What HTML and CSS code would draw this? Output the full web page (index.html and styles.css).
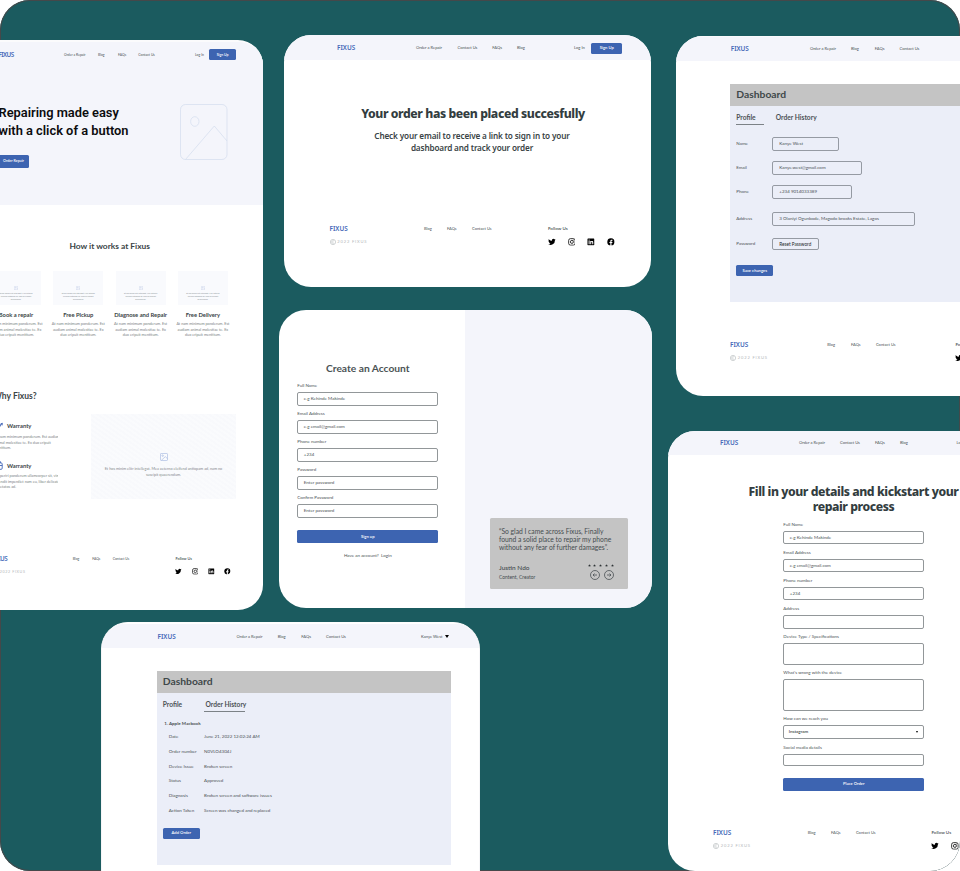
FILE: index.html
```html
<!DOCTYPE html>
<html lang="en">
<head>
<meta charset="utf-8">
<title>Fixus screens</title>
<link rel="stylesheet" href="styles.css">
</head>
<body>
<svg class="defs" aria-hidden="true">
  <symbol id="twitter" viewBox="0 0 24 24"><path d="M23.6 4.9c-.8.4-1.700.6-2.700.8 1-.6 1.700-1.500 2-2.600-.9.500-1.900.9-3 1.100A4.700 4.700 0 0 0 11.900 8.500C8 8.300 4.500 6.400 2.200 3.600c-1.300 2.100-.6 4.900 1.400 6.300-.8 0-1.500-.2-2.100-.6 0 2.200 1.500 4.200 3.800 4.700-.7.200-1.400.2-2.100.1.600 1.900 2.300 3.200 4.400 3.300A9.500 9.500 0 0 1 .6 19.300 13.400 13.400 0 0 0 21.200 7.400c.9-.7 1.800-1.500 2.400-2.500z"/></symbol>
  <symbol id="instagram" viewBox="0 0 24 24"><rect x="2" y="2" width="20" height="20" rx="5.500" fill="none" stroke="currentColor" stroke-width="2.400"/><circle cx="12" cy="12" r="4.600" fill="none" stroke="currentColor" stroke-width="2.400"/><circle cx="17.500" cy="6.500" r="1.500"/></symbol>
  <symbol id="linkedin" viewBox="0 0 24 24"><path fill-rule="evenodd" d="M3 1.500h18A1.500 1.500 0 0 1 22.500 3v18a1.500 1.500 0 0 1-1.500 1.500H3A1.500 1.500 0 0 1 1.500 21V3A1.500 1.500 0 0 1 3 1.500zM5 9.500v9.500h3V9.500zM6.500 4.700a1.800 1.800 0 1 0 0 3.600 1.800 1.800 0 0 0 0-3.600zM10 9.500V19h3v-5c0-2.700 3.200-2.700 3.200 0v5h3v-6c0-4.200-4.400-4.500-6.200-2.200V9.500z"/></symbol>
  <symbol id="facebook" viewBox="0 0 24 24"><path d="M23 12A11 11 0 1 0 10.300 22.900v-7.700H7.500V12h2.800V9.600c0-2.800 1.600-4.300 4.100-4.300 1.200 0 2.500.2 2.500.2v2.700h-1.400c-1.400 0-1.800.9-1.800 1.700V12h3.100l-.5 3.200h-2.600v7.700A11 11 0 0 0 23 12z"/></symbol>
  <symbol id="copyright" viewBox="0 0 24 24"><circle cx="12" cy="12" r="10.500" fill="none" stroke="currentColor" stroke-width="2.400"/><path d="M16 8.700a5.200 5.200 0 1 0 0 6.600" fill="none" stroke="currentColor" stroke-width="2.400"/></symbol>
  <symbol id="image" viewBox="0 0 24 24"><g fill="none" stroke="currentColor" stroke-width="2"><rect x="1.500" y="1.500" width="21" height="21" rx="2"/><circle cx="8" cy="8" r="2.200"/><path d="M4 22 16 11l6.500 6"/></g></symbol>
  <symbol id="star" viewBox="0 0 24 24"><path d="m12 1 3.200 7.400 8 .7-6 5.300 1.800 7.800-7-4.100-7 4.100 1.800-7.800-6-5.300 8-.7z"/></symbol>
</svg>

<main class="board">

  <section class="screen home">
    <div class="hero">
      <nav class="nav"><b class="logo">FIXUS</b><a>Order a Repair</a><a>Blog</a><a>FAQs</a><a>Contact Us</a><a>Log In</a><span class="btn">Sign Up</span></nav>
      <div class="hero-body">
        <div>
          <h1>Repairing made easy<br>with a click of a button</h1>
          <span class="btn">Order Repair</span>
        </div>
        <svg class="hero-image" viewBox="0 0 48 56"><g fill="none" stroke="#d3ddee" stroke-width=".7"><rect x=".5" y=".5" width="46.500" height="55" rx="5"/><ellipse cx="14.800" cy="17.500" rx="4.200" ry="4.800"/><path d="M5.500 55.500 34.300 22 47 37"/></g></svg>
      </div>
    </div>
    <h2 class="how">How it works at Fixus</h2>
    <div class="steps">
      <article><div class="thumb"><svg><use href="#image"/></svg><p>Et hos minim elitr intellegat. Mea aeterno<br>eleifend antiopam ad, nam no suscipit<br>quaerendum.</p></div><h3>Book a repair</h3><p class="copy">At nam minimum ponderum. Est<br>audiam animal molestiae te. Ex<br>duo eripuit mentitum.</p></article>
      <article><div class="thumb"><svg><use href="#image"/></svg><p>Et hos minim elitr intellegat. Mea aeterno<br>eleifend antiopam ad, nam no suscipit<br>quaerendum.</p></div><h3>Free Pickup</h3><p class="copy">At nam minimum ponderum. Est<br>audiam animal molestiae te. Ex<br>duo eripuit mentitum.</p></article>
      <article><div class="thumb"><svg><use href="#image"/></svg><p>Et hos minim elitr intellegat. Mea aeterno<br>eleifend antiopam ad, nam no suscipit<br>quaerendum.</p></div><h3>Diagnose and Repair</h3><p class="copy">At nam minimum ponderum. Est<br>audiam animal molestiae te. Ex<br>duo eripuit mentitum.</p></article>
      <article><div class="thumb"><svg><use href="#image"/></svg><p>Et hos minim elitr intellegat. Mea aeterno<br>eleifend antiopam ad, nam no suscipit<br>quaerendum.</p></div><h3>Free Delivery</h3><p class="copy">At nam minimum ponderum. Est<br>audiam animal molestiae te. Ex<br>duo eripuit mentitum.</p></article>
    </div>
    <h2 class="why">Why Fixus?</h2>
    <div class="reasons">
      <div class="reason-list">
        <article><h3><svg viewBox="0 0 8 8"><path d="M1 4.500 3.500 6.500 7.300 1M5 2.500l2.300-1.500v2" /></svg>Warranty</h3><p class="copy">At nam minimum ponderum. Est audiam<br>animal molestiae te. Ex duo eripuit<br>mentitum.</p></article>
        <article><h3><svg viewBox="0 0 8 8"><rect x="1" y="1.700" width="6.300" height="5.700" rx="1"/><path d="M2.500 1.700V.6h3.300v1.100M1 4h6.300"/></svg>Warranty</h3><p class="copy">Ei aperiri ponderum ullamcorper sit, vim<br>offendit imperdiet nam eu, liber delicata<br>expetatos ad.</p></article>
      </div>
      <div class="picture"><svg><use href="#image"/></svg><p>Et hos minim elitr intellegat. Mea aeterno eleifend antiopam ad, nam no<br>suscipit quaerendum.</p></div>
    </div>
    <footer class="footer"><b class="logo">FIXUS</b><a>Blog</a><a>FAQs</a><a>Contact Us</a><b class="follow">Follow Us</b>
      <span class="copyright"><svg><use href="#copyright"/></svg>2022 FIXUS</span><span class="social"><svg><use href="#twitter"/></svg><svg><use href="#instagram"/></svg><svg><use href="#linkedin"/></svg><svg><use href="#facebook"/></svg></span></footer>
  </section>

  <section class="screen placed">
    <nav class="nav"><b class="logo">FIXUS</b><a>Order a Repair</a><a>Contact Us</a><a>FAQs</a><a>Blog</a><a>Log In</a><span class="btn">Sign Up</span></nav>
    <h1>Your order has been placed succesfully</h1>
    <p class="lead">Check your email to receive a link to sign in to your<br>dashboard and track your order</p>
    <footer class="footer"><b class="logo">FIXUS</b><a>Blog</a><a>FAQs</a><a>Contact Us</a><b class="follow">Follow Us</b>
      <span class="copyright"><svg><use href="#copyright"/></svg>2022 FIXUS</span><span class="social"><svg><use href="#twitter"/></svg><svg><use href="#instagram"/></svg><svg><use href="#linkedin"/></svg><svg><use href="#facebook"/></svg></span></footer>
  </section>

  <section class="screen profile">
    <nav class="nav"><b class="logo">FIXUS</b><a>Order a Repair</a><a>Blog</a><a>FAQs</a><a>Contact Us</a></nav>
    <div class="panel">
      <h2>Dashboard</h2>
      <div class="tabs"><b class="active">Profile</b><b>Order History</b></div>
      <dl class="fields">
        <dt>Name</dt><dd class="w-name">Kanye West</dd>
        <dt>Email</dt><dd class="w-email">Kanye.west@gmail.com</dd>
        <dt>Phone</dt><dd class="w-phone">+234 9014033389</dd>
        <dt>Address</dt><dd class="w-address">3 Olaniyi Ogunbode, Magodo brooks Estate, Lagos</dd>
        <dt>Password</dt><dd class="w-reset">Reset Password</dd>
      </dl>
      <span class="btn">Save changes</span>
    </div>
    <footer class="footer"><b class="logo">FIXUS</b><a>Blog</a><a>FAQs</a><a>Contact Us</a><b class="follow">Follow Us</b>
      <span class="copyright"><svg><use href="#copyright"/></svg>2022 FIXUS</span><span class="social"><svg><use href="#twitter"/></svg></span></footer>
  </section>

  <section class="screen signup">
    <div class="form">
      <h2>Create an Account</h2>
      <label>Full Name</label><div class="input">e.g Kehinde Makinde</div>
      <label>Email Address</label><div class="input">e.g email@gmail.com</div>
      <label>Phone number</label><div class="input">+234</div>
      <label>Password</label><div class="input">Enter password</div>
      <label>Confirm Password</label><div class="input">Enter password</div>
      <span class="btn wide">Sign up</span>
      <p class="login">Have an account?&nbsp; Login</p>
    </div>
    <div class="aside">
      <div class="quote">
        <p>“So glad I came across Fixus, Finally<br>found a solid place to repair my phone<br>without any fear of further damages”.</p>
        <div class="byline">
          <div><div class="who">Justin Ndo</div><div class="role">Content, Creator</div></div>
          <div class="controls">
            <div class="stars"><svg><use href="#star"/></svg><svg><use href="#star"/></svg><svg><use href="#star"/></svg><svg><use href="#star"/></svg><svg><use href="#star"/></svg></div>
            <div class="arrows"><svg viewBox="0 0 10 10"><circle cx="5" cy="5" r="4.500"/><path d="M7 5H3M4.500 3.500 3 5l1.500 1.500"/></svg><svg viewBox="0 0 10 10"><circle cx="5" cy="5" r="4.500"/><path d="M3 5h4M5.500 3.500 7 5 5.500 6.500"/></svg></div>
          </div>
        </div>
      </div>
    </div>
  </section>

  <section class="screen repair">
    <nav class="nav"><b class="logo">FIXUS</b><a>Order a Repair</a><a>Contact Us</a><a>FAQs</a><a>Blog</a><a>Log In</a></nav>
    <h1>Fill in your details and kickstart your<br>repair process</h1>
    <div class="form">
      <label>Full Name</label><div class="input">e.g Kehinde Makinde</div>
      <label>Email Address</label><div class="input">e.g email@gmail.com</div>
      <label>Phone number</label><div class="input">+234</div>
      <label>Address</label><div class="input"></div>
      <label>Device Type / Specifications</label><div class="input medium"></div>
      <label>What's wrong with the device</label><div class="input tall"></div>
      <label>How can we reach you</label><div class="input select">Instagram<i class="caret"></i></div>
      <label>Social media details</label><div class="input short"></div>
      <span class="btn wide">Place Order</span>
    </div>
    <footer class="footer"><b class="logo">FIXUS</b><a>Blog</a><a>FAQs</a><a>Contact Us</a><b class="follow">Follow Us</b>
      <span class="copyright"><svg><use href="#copyright"/></svg>2022 FIXUS</span><span class="social"><svg><use href="#twitter"/></svg><svg><use href="#instagram"/></svg></span></footer>
  </section>

  <section class="screen history">
    <nav class="nav"><b class="logo">FIXUS</b><a>Order a Repair</a><a>Blog</a><a>FAQs</a><a>Contact Us</a><a class="user">Kanye West<i class="caret"></i></a></nav>
    <div class="panel">
      <h2>Dashboard</h2>
      <div class="tabs"><b>Profile</b><b class="active">Order History</b></div>
      <h4>1. Apple Macbook</h4>
      <dl class="details">
        <dt>Date</dt><dd>June 21, 2022 12:02:24 AM</dd>
        <dt>Order number</dt><dd>N0VLO4304J</dd>
        <dt>Device Issue</dt><dd>Broken screen</dd>
        <dt>Status</dt><dd>Approved</dd>
        <dt>Diagnosis</dt><dd>Broken screen and software issues</dd>
        <dt>Action Taken</dt><dd>Screen was changed and replaced</dd>
      </dl>
      <span class="btn">Add Order</span>
    </div>
  </section>

</main>
</body>
</html>
```
FILE: styles.css
```css
* { box-sizing: border-box; }
body { margin: 0; background: #fff; font-family: Lato, "Liberation Sans", sans-serif; color: #3a4446; overflow: hidden; }
h1, h2, h3, h4, p, dl, dd { margin: 0; }
svg { display: block; flex: none; }
.defs { display: none; }

.board { position: relative; width: 960px; height: 871px; overflow: hidden; background: #1b5b5f; border-radius: 30px; box-shadow: inset 0 0 0 1px #45484a; }

/* Screens are pinned freely on the board */
.screen { position: absolute; background: #fff; border-radius: 27px; overflow: hidden; white-space: nowrap; font-size: 4.5px; line-height: 6px; }
.home { left: -37px; top: 40px; width: 300px; height: 570px; border-top: 2px solid #fbfbfc; border-radius: 25px; }
.placed { left: 284px; top: 35px; width: 367px; height: 252px; }
.profile { left: 676px; top: 36px; width: 330px; height: 360px; }
.signup { left: 279px; top: 310px; width: 373px; height: 298px; display: flex; }
.repair { left: 668px; top: 431px; width: 330px; height: 440px; }
.history { left: 101px; top: 622px; width: 379px; height: 300px; border: 1.5px solid #f5f5f7; border-top-color: #fdfdfd; }

/* Navigation */
.nav { display: grid; align-items: center; background: #f4f5fb; font-size: 4.08px; color: #4b5355; }
.logo { font: 600 6.4px/8px "Noto Sans", sans-serif; color: #4468b8; }
.btn { display: flex; align-items: center; justify-content: center; background: #3d64b1; color: #fff; border-radius: 1.5px; font-size: 4.15px; font-weight: 600; }
.placed .nav { height: 24.5px; padding: 2px 0 0 53px; grid-template-columns: 79px 41.5px 34.8px 24.7px 57px 17px 31.5px; }
.placed .nav .btn { height: 11px; }
.profile .nav { height: 24.5px; padding: 1px 0 0 54.7px; border-top: 1px solid #fafafc; grid-template-columns: 79.3px 41px 23.7px 24.8px 50px; }
.repair .nav { height: 23.5px; padding: 1px 0 0 52px; grid-template-columns: 79px 41px 35px 25px 56.5px 30px; }
.history .nav { height: 24px; padding: 1px 0 0 55.5px; margin-top: 1px; grid-template-columns: 79px 41.2px 23.6px 24.7px 95px 40px; }
.user { display: flex; align-items: center; gap: 3px; }
.caret { border: 2.4px solid transparent; border-top: 3.6px solid #000; border-bottom: 0; }

/* Headlines */
.placed h1, .repair h1 { font: 800 12.2px/14.5px "Noto Sans", sans-serif; text-align: center; color: #333d3f; }
.placed h1 { margin: 47.5px 0 0 11px; letter-spacing: -.41px; }
.lead { margin: 8.5px 0 0 9px; text-align: center; font: 600 8.2px/11.6px "Noto Sans", sans-serif; letter-spacing: -.16px; }
.repair h1 { width: 260px; margin: 30.5px 0 0 55.5px; letter-spacing: -.43px; }

/* Footer */
.footer { display: grid; align-items: center; grid-template-rows: 8px 8px; row-gap: 5.5px; font-size: 4px; color: #4b5355; }
.follow { font-size: 4.55px; font-weight: 600; }
.copyright { grid-column: 1 / 5; display: flex; align-items: center; gap: 1.8px; color: #b4b8ba; font-size: 4.1px; letter-spacing: .82px; }
.copyright svg { width: 6px; height: 6px; }
.social { display: flex; gap: 11.8px; color: #000; }
.social svg { width: 7.8px; height: 7.8px; }
.placed .footer { margin: 71.5px 0 0 45.5px; grid-template-columns: 94.5px 23px 25px 76px 80px; }
.profile .footer { margin: 39px 0 0 54px; grid-template-columns: 97.3px 23.7px 25px 79.5px 60px; row-gap: 5px; }
.repair .footer { margin: 38px 0 0 45px; grid-template-columns: 94.8px 23.2px 25px 75.5px 60px; }

/* Home */
.hero { height: 163px; background: #f4f5fb; }
.home .nav { height: 25.5px; padding-left: 35.5px; font-size: 3.4px; grid-template-columns: 65.5px 34px 20px 20.3px 56.7px 14.5px 26.3px; }
.home .logo { font-size: 6.3px; letter-spacing: -.55px; }
.home .nav .btn { height: 11px; font-size: 3.5px; }
.hero-body { display: flex; gap: 51.5px; padding: 36.5px 0 0 35.5px; }
.home h1 { font: 600 12.85px/18px Roboto, sans-serif; color: #0c0c0e; width: 130px; }
.hero-body .btn { width: 30px; height: 12.5px; margin-top: 15px; font-size: 3.7px; }
.hero-image { width: 48px; height: 56px; margin-top: -.5px; }
.how { width: 220px; margin: 35px 0 0 36.7px; text-align: center; font-size: 8.4px; line-height: 12px; font-weight: 700; }
.steps { display: grid; grid-template-columns: repeat(4, 53px); column-gap: 9.3px; margin: 19px 0 0 26.5px; text-align: center; }
.thumb { width: 50px; height: 33.5px; margin: 0 auto; padding-top: 14.5px; background: #f9fafd; color: #8b9195; font-size: 1.85px; line-height: 2.9px; }
.thumb svg { width: 4px; height: 4px; margin: 0 auto 2.5px; color: #b5c3e4; }
.home h3 { font-size: 5.8px; line-height: 8px; font-weight: 700; }
.steps h3 { margin: 6.5px -5px 2.2px; }
.copy { font-size: 3.78px; line-height: 5.6px; color: #7c8486; }
.why { margin: 52px 0 0 30px; font-size: 8.5px; line-height: 12px; font-weight: 700; }
.reasons { display: flex; gap: 33px; margin: 12.5px 0 0 31px; }
.reason-list { width: 64px; overflow: hidden; padding-top: 7.5px; }
.reason-list article { height: 39.3px; }
.reason-list h3 { display: flex; align-items: center; gap: 4px; margin-bottom: 3px; }
.reason-list h3 svg { width: 9px; height: 9px; fill: none; stroke: #4468b8; stroke-width: .8; }
.picture { width: 145px; height: 85px; padding-top: 38.5px; text-align: center; font-size: 3.78px; line-height: 5.5px; color: #85898d; background: repeating-linear-gradient(35deg, #f8f9fc 0 2px, #fafbfd 2px 4px); }
.picture svg { width: 8px; height: 8px; margin: 0 auto 5.5px; color: #a9bbe2; }
.home .footer { margin: 54px 0 0 29px; grid-template-columns: 80.7px 19.5px 20.5px 62.8px 70px; row-gap: 5px; font-size: 3.4px; }
.home .follow { font-size: 3.8px; }
.home .copyright { font-size: 3.7px; letter-spacing: .6px; }
.home .social { gap: 9.5px; }
.home .social svg { width: 6.7px; height: 6.7px; }

/* Dashboard panels */
.panel { background: #ebeef8; padding-left: 6.3px; color: #4b5256; }
.panel h2 { height: 22px; margin-left: -6.3px; padding-left: 6.3px; background: #c4c4c4; color: #3f484a; font-size: 10.3px; line-height: 21.5px; }
.tabs { display: flex; font-size: 6.65px; line-height: 9px; }
.profile .tabs, .history .tabs { padding-top: 7px; }
.tabs b { height: 12px; }
.tabs .active { border-bottom: .8px solid #7c8287; }
.panel .btn { width: 37px; height: 11.3px; font-size: 4.2px; }
.profile .panel { margin: 23.5px 0 0 54px; height: 217.5px; }
.profile .tabs .active { width: 27.7px; margin-right: 11.8px; }
.fields { display: grid; grid-template-columns: 36px 150px; grid-template-rows: 24px 24px 24px 30.5px 19px; align-items: center; margin-top: 7px; }
.fields dd { height: 14px; padding-left: 6px; border: 1px solid #959aa3; border-radius: 2px; line-height: 12px; }
.fields .w-name { width: 67px; }
.fields .w-email { width: 89.5px; }
.fields .w-phone { width: 79.5px; }
.fields .w-address { width: 142.3px; }
.fields .w-reset { width: 46.5px; height: 12px; line-height: 10px; font-size: 4.65px; color: #22282a; }
.profile .panel .btn { margin-top: 11.5px; }

.history .panel { width: 294.5px; height: 194px; margin: 22.5px 0 0 54.5px; }
.history .tabs .active { width: 40.5px; padding-left: 1.2px; white-space: nowrap; }
.history .tabs b:first-child { width: 41.5px; }
.history h4 { margin: 9.5px 0 0 1.5px; font-size: 4.5px; line-height: 6px; }
.details { display: grid; grid-template-columns: 35.3px 100px; grid-auto-rows: 14.85px; align-items: center; margin: 2.5px 0 0 6px; }
.history .panel .btn { margin-top: 9px; }

/* Forms */
.form { display: flex; flex-direction: column; width: 141px; color: #4b5355; }
.form label { margin-bottom: 3px; }
.input { height: 13.8px; margin-bottom: 5.3px; padding-left: 5.5px; border: 1px solid #929799; border-radius: 2px; line-height: 12px; }
.form .btn { height: 12.5px; }
.signup .form { margin: 49.7px 26.7px 0 18.3px; }
.signup h2 { text-align: center; font-size: 10.24px; line-height: 16px; margin-bottom: 7.3px; }
.signup .btn { margin-top: 7px; }
.login { margin-top: 10.5px; text-align: center; }
.repair .form { margin: 7.5px 0 0 115.3px; }
.input.medium { height: 22.2px; }
.input.tall { height: 31.8px; }
.input.short { height: 12.8px; }
.input.select { display: flex; align-items: center; justify-content: space-between; padding: 0 5px 0 4.5px; color: #15191a; }
.select .caret { border-width: 1.5px; border-top-width: 2px; border-bottom: 0; }
.repair .btn { margin-top: 6.5px; }

/* Testimonial */
.aside { flex: 1; background: #f4f5fb; padding: 208px 0 0 25px; }
.quote { width: 138.3px; height: 70.5px; padding: 9px 9px 0; background: #c4c4c4; border-radius: 1.5px; color: #454c4f; }
.quote p { font-size: 6.73px; line-height: 8px; }
.byline { display: flex; justify-content: space-between; margin-top: 11.5px; }
.who { font-size: 6.48px; line-height: 9px; font-weight: 500; }
.role { margin-top: 2px; font-size: 4.95px; line-height: 7px; }
.controls { width: 32px; }
.stars { display: flex; gap: 2.7px; padding: 1.5px 0 0 .5px; }
.stars svg { width: 3px; height: 3px; fill: #2e3436; }
.arrows { display: flex; gap: 3.5px; margin: 2.5px 0 0 3px; }
.arrows svg { width: 10px; height: 10px; fill: none; stroke: #4b5255; stroke-width: .8; }
```
